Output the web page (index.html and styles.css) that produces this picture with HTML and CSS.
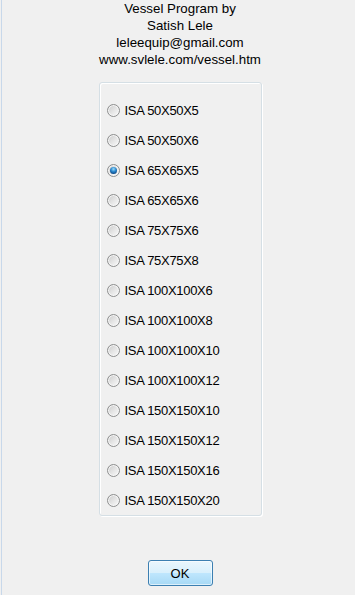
FILE: index.html
```html
<!DOCTYPE html>
<html lang="en">
<head>
    <meta charset="UTF-8">
    <meta name="viewport" content="width=device-width, initial-scale=1.0">
    <link rel="stylesheet" href="styles.css">
</head>
<body>
    <div class="window">
        <div class="credits">
            <p>Vessel Program by</p>
            <p>Satish Lele</p>
            <p>leleequip@gmail.com</p>
            <p>www.svlele.com/vessel.htm</p>
        </div>

        <div class="group">
            <label class="option"><span class="radio"></span>ISA 50X50X5</label>
            <label class="option"><span class="radio"></span>ISA 50X50X6</label>
            <label class="option"><span class="radio checked"></span>ISA 65X65X5</label>
            <label class="option"><span class="radio"></span>ISA 65X65X6</label>
            <label class="option"><span class="radio"></span>ISA 75X75X6</label>
            <label class="option"><span class="radio"></span>ISA 75X75X8</label>
            <label class="option"><span class="radio"></span>ISA 100X100X6</label>
            <label class="option"><span class="radio"></span>ISA 100X100X8</label>
            <label class="option"><span class="radio"></span>ISA 100X100X10</label>
            <label class="option"><span class="radio"></span>ISA 100X100X12</label>
            <label class="option"><span class="radio"></span>ISA 150X150X10</label>
            <label class="option"><span class="radio"></span>ISA 150X150X12</label>
            <label class="option"><span class="radio"></span>ISA 150X150X16</label>
            <label class="option"><span class="radio"></span>ISA 150X150X20</label>
        </div>

        <div class="actions">
            <button class="ok-button">OK</button>
        </div>
    </div>
</body>
</html>
```

FILE: styles.css
```css
body {
    margin: 0;
    padding: 0;
    background-color: #f0f0f0;
    font-family: "Liberation Sans", Arial, sans-serif;
    color: #000;
    overflow: hidden;
}

.window {
    width: 356px;
    height: 595px;
    margin-left: 1px;
    border-left: 1px solid #c8d8ea;
    background-color: #f0f0f0;
}

.credits {
    text-align: center;
    font-size: 13.3px;
    line-height: 17px;
}

.credits p {
    margin: 0;
}

.group {
    box-sizing: border-box;
    width: 163px;
    height: 434px;
    margin: 14px auto 0;
    padding: 12px 0 0 7px;
    border: 1px solid #d5dfe5;
    border-radius: 3px;
    box-shadow: inset 1px 1px 0 #fff, 1px 1px 0 #fff;
}

.option {
    display: flex;
    align-items: center;
    height: 30px;
    font-size: 13px;
    letter-spacing: -0.3px;
}

.radio {
    position: relative;
    box-sizing: border-box;
    width: 13px;
    height: 13px;
    margin-right: 5px;
    border: 1px solid #8e8f8f;
    border-radius: 50%;
    background: linear-gradient(135deg, #c9c9c9 0%, #e4e4e4 50%, #fbfbfb 100%);
    box-shadow: inset 0 0 0 1px #f6f6f6;
}

.radio.checked::after {
    content: "";
    position: absolute;
    left: 2px;
    top: 2px;
    width: 7px;
    height: 7px;
    border-radius: 50%;
    background: radial-gradient(circle at 50% 30%, #9edcf8 0%, #2d8ad0 40%, #0f4f8f 75%, #0b2f5c 100%);
}

.actions {
    display: flex;
    justify-content: center;
    margin-top: 44px;
}

.ok-button {
    width: 65px;
    height: 26px;
    padding: 0;
    font-family: "Liberation Sans", Arial, sans-serif;
    font-size: 13px;
    color: #000;
    border: 1px solid #3c7fb1;
    border-radius: 3px;
    background: linear-gradient(#eaf6fd 0%, #d9f0fc 48%, #bee6fd 52%, #a7d9f5 100%);
    box-shadow: inset 0 0 0 1px rgba(255, 255, 255, 0.6);
}
```
